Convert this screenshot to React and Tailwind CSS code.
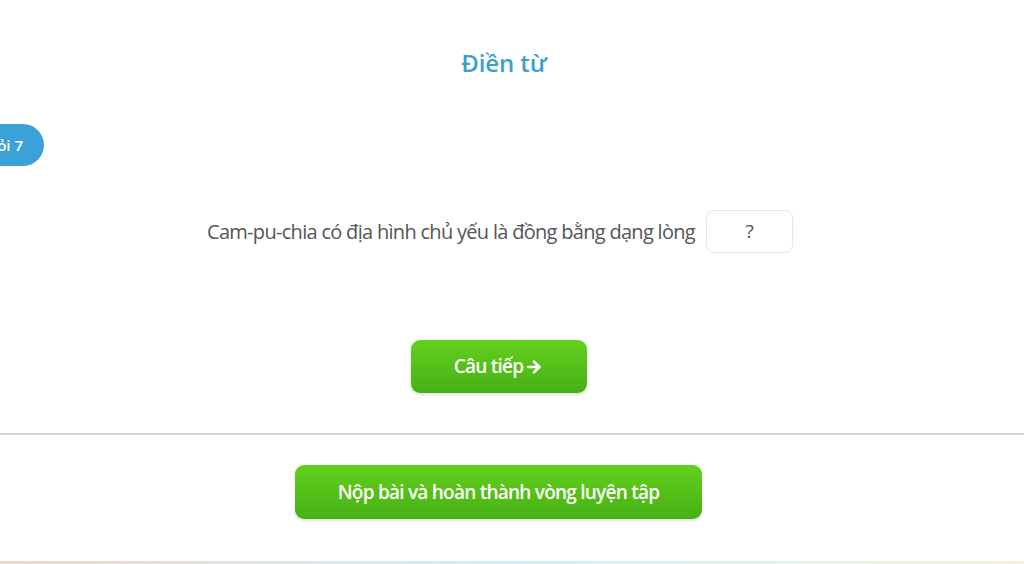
import React from 'react';

const font = { fontFamily: '"Open Sans", "Noto Sans", sans-serif' };

const GreenButton = ({ children, className = '' }) => (
  <button
    type="button"
    className={`rounded-[9px] bg-gradient-to-b from-[#64d01c] to-[#47b016] text-white font-semibold tracking-[-0.04em] shadow-[0_2px_3px_rgba(0,0,0,0.12)] ${className}`}
  >
    {children}
  </button>
);

export default function App() {
  return (
    <div className="relative w-[1024px] h-[564px] overflow-hidden bg-white" style={font}>
      <h1 className="pt-[46px] pr-[16px] text-center text-[24px] leading-[34px] font-semibold text-[#3d9fd0] tracking-[-0.005em]">
        Điền từ
      </h1>

      <div className="mt-[44px] flex">
        <div className="-ml-[60px] h-[42px] w-[104px] rounded-full bg-[#3aa1d9] flex items-center justify-end pr-[21px] text-white text-[15px] font-semibold">
          Câu hỏi 7
        </div>
      </div>

      <div className="mt-[44px] flex items-center justify-center gap-[11px] pr-[24px]">
        <p className="text-[20px] text-[#555555] tracking-[-0.035em]">
          Cam-pu-chia có địa hình chủ yếu là đồng bằng dạng lòng
        </p>
        <div className="h-[43px] w-[87px] rounded-[8px] border border-[#e6e6e6] flex items-center justify-center text-[19px] text-[#555555]">
          ?
        </div>
      </div>

      <div className="mt-[87px] flex justify-center">
        <GreenButton className="ml-[-27px] h-[53px] w-[176px] text-[19px] flex items-center justify-center gap-[2px]">
          Câu tiếp
          <svg width="18" height="18" viewBox="0 0 24 24" fill="none" stroke="white" strokeWidth="3.6" strokeLinecap="round" strokeLinejoin="round">
            <path d="M4 12h15" />
            <path d="M12 5l7 7-7 7" />
          </svg>
        </GreenButton>
      </div>

      <div className="mt-[40px] h-[2px] bg-[#d2d2d2]" />

      <div className="mt-[30px] flex justify-center">
        <GreenButton className="ml-[-27px] h-[54px] w-[407px] text-[19px]">
          Nộp bài và hoàn thành vòng luyện tập
        </GreenButton>
      </div>

      <div className="absolute bottom-0 left-0 right-0 h-[3px] bg-gradient-to-r from-[#e8d8d0] via-[#d8eef4] to-[#f2f0e0]" />
    </div>
  );
}
